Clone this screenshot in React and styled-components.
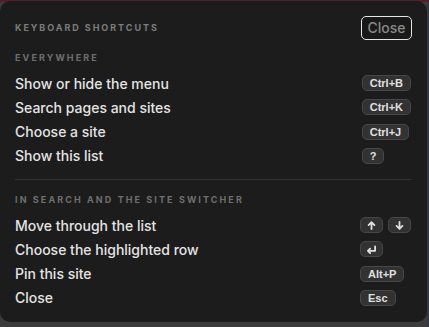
import React from "react";
import styled, { createGlobalStyle } from "styled-components";

const Global = createGlobalStyle`
  html, body { margin: 0; padding: 0; }
  body {
    width: 429px;
    height: 327px;
    overflow: hidden;
    background:
      linear-gradient(to bottom, #5a1b2a 0, #5a1b2a 2px, transparent 2px),
      linear-gradient(to right, #3b3b3b 0, #3b3b3b 427px, #33393f 427px);
    font-family: Inter, "Noto Sans", sans-serif;
  }
  #root { padding-top: 1px; }
`;

const Panel = styled.div`
  width: 427px;
  height: 321px;
  box-sizing: border-box;
  background: #1c1c1c;
  border-radius: 10px;
  padding: 15px 16px 12px 15px;
  display: flex;
  flex-direction: column;
`;

const Header = styled.div`
  display: flex;
  align-items: center;
  justify-content: space-between;
  height: 23px;
`;

const Title = styled.h2`
  margin: 0;
  font-size: 9px;
  font-weight: 700;
  letter-spacing: 1.95px;
  color: #7c7c7c;
  text-transform: uppercase;
`;

const CloseButton = styled.button`
  width: 51px;
  height: 24px;
  margin-right: -1px;
  box-sizing: border-box;
  border: 1px solid #e6e6e6;
  border-radius: 5px;
  background: #191919;
  color: #8a8a8a;
  font-family: Inter, sans-serif;
  font-size: 14px;
  font-weight: 500;
  padding: 0;
`;

const SectionTitle = styled.h3`
  margin: ${(p) => p.$top}px 0 7px;
  font-size: 9px;
  line-height: 12px;
  font-weight: 700;
  letter-spacing: 2.1px;
  color: #6f6f6f;
  text-transform: uppercase;
`;

const Table = styled.div`
  display: grid;
  grid-template-columns: 1fr auto;
  grid-auto-rows: 24.25px;
  align-items: center;
`;

const Label = styled.span`
  font-size: 14px;
  font-weight: 500;
  color: #e4e4e4;
`;

const Keys = styled.span`
  display: flex;
  gap: 5px;
`;

const Kbd = styled.kbd`
  display: inline-flex;
  align-items: center;
  justify-content: center;
  box-sizing: border-box;
  height: 16px;
  min-width: ${(p) => (p.$icon ? 23 : 0)}px;
  padding: 0 ${(p) => (p.$icon ? 0 : 7)}px;
  background: #323232;
  border: 1px solid #474747;
  border-radius: 5px;
  color: #e0e0e0;
  font-family: "Liberation Sans", Arial, sans-serif;
  font-weight: 700;
  font-size: 11px;
`;

const Divider = styled.hr`
  margin: 11px 0 0;
  border: 0;
  border-top: 1px solid #333;
`;

const Up = () => (
  <svg width="9" height="9" viewBox="0 0 10 10" fill="none" stroke="#e0e0e0" strokeWidth="2" strokeLinecap="round" strokeLinejoin="round">
    <path d="M5 9V1.5M1.8 4.5L5 1.3 8.2 4.5" />
  </svg>
);
const Down = () => (
  <svg width="9" height="9" viewBox="0 0 10 10" fill="none" stroke="#e0e0e0" strokeWidth="2" strokeLinecap="round" strokeLinejoin="round">
    <path d="M5 1v7.5M1.8 5.5L5 8.7 8.2 5.5" />
  </svg>
);
const Enter = () => (
  <svg width="11" height="9" viewBox="0 0 12 10" fill="none" stroke="#e0e0e0" strokeWidth="2" strokeLinecap="round" strokeLinejoin="round">
    <path d="M10 1.5V6.5H2M4.5 4L2 6.5 4.5 9" />
  </svg>
);

const everywhere = [
  ["Show or hide the menu", ["Ctrl+B"]],
  ["Search pages and sites", ["Ctrl+K"]],
  ["Choose a site", ["Ctrl+J"]],
  ["Show this list", ["?"]],
];

const search = [
  ["Move through the list", [<Up key="u" />, <Down key="d" />]],
  ["Choose the highlighted row", [<Enter key="e" />]],
  ["Pin this site", ["Alt+P"]],
  ["Close", ["Esc"]],
];

const Rows = ({ items }) => (
  <Table>
    {items.map(([label, keys]) => (
      <React.Fragment key={label}>
        <Label>{label}</Label>
        <Keys>
          {keys.map((k, i) => (
            <Kbd key={i} $icon={typeof k !== "string"}>
              {k}
            </Kbd>
          ))}
        </Keys>
      </React.Fragment>
    ))}
  </Table>
);

export default function App() {
  return (
    <>
      <Global />
      <Panel>
        <Header>
          <Title>Keyboard shortcuts</Title>
          <CloseButton>Close</CloseButton>
        </Header>
        <SectionTitle $top={13}>Everywhere</SectionTitle>
        <Rows items={everywhere} />
        <Divider />
        <SectionTitle $top={14}>In search and the site switcher</SectionTitle>
        <Rows items={search} />
      </Panel>
    </>
  );
}
